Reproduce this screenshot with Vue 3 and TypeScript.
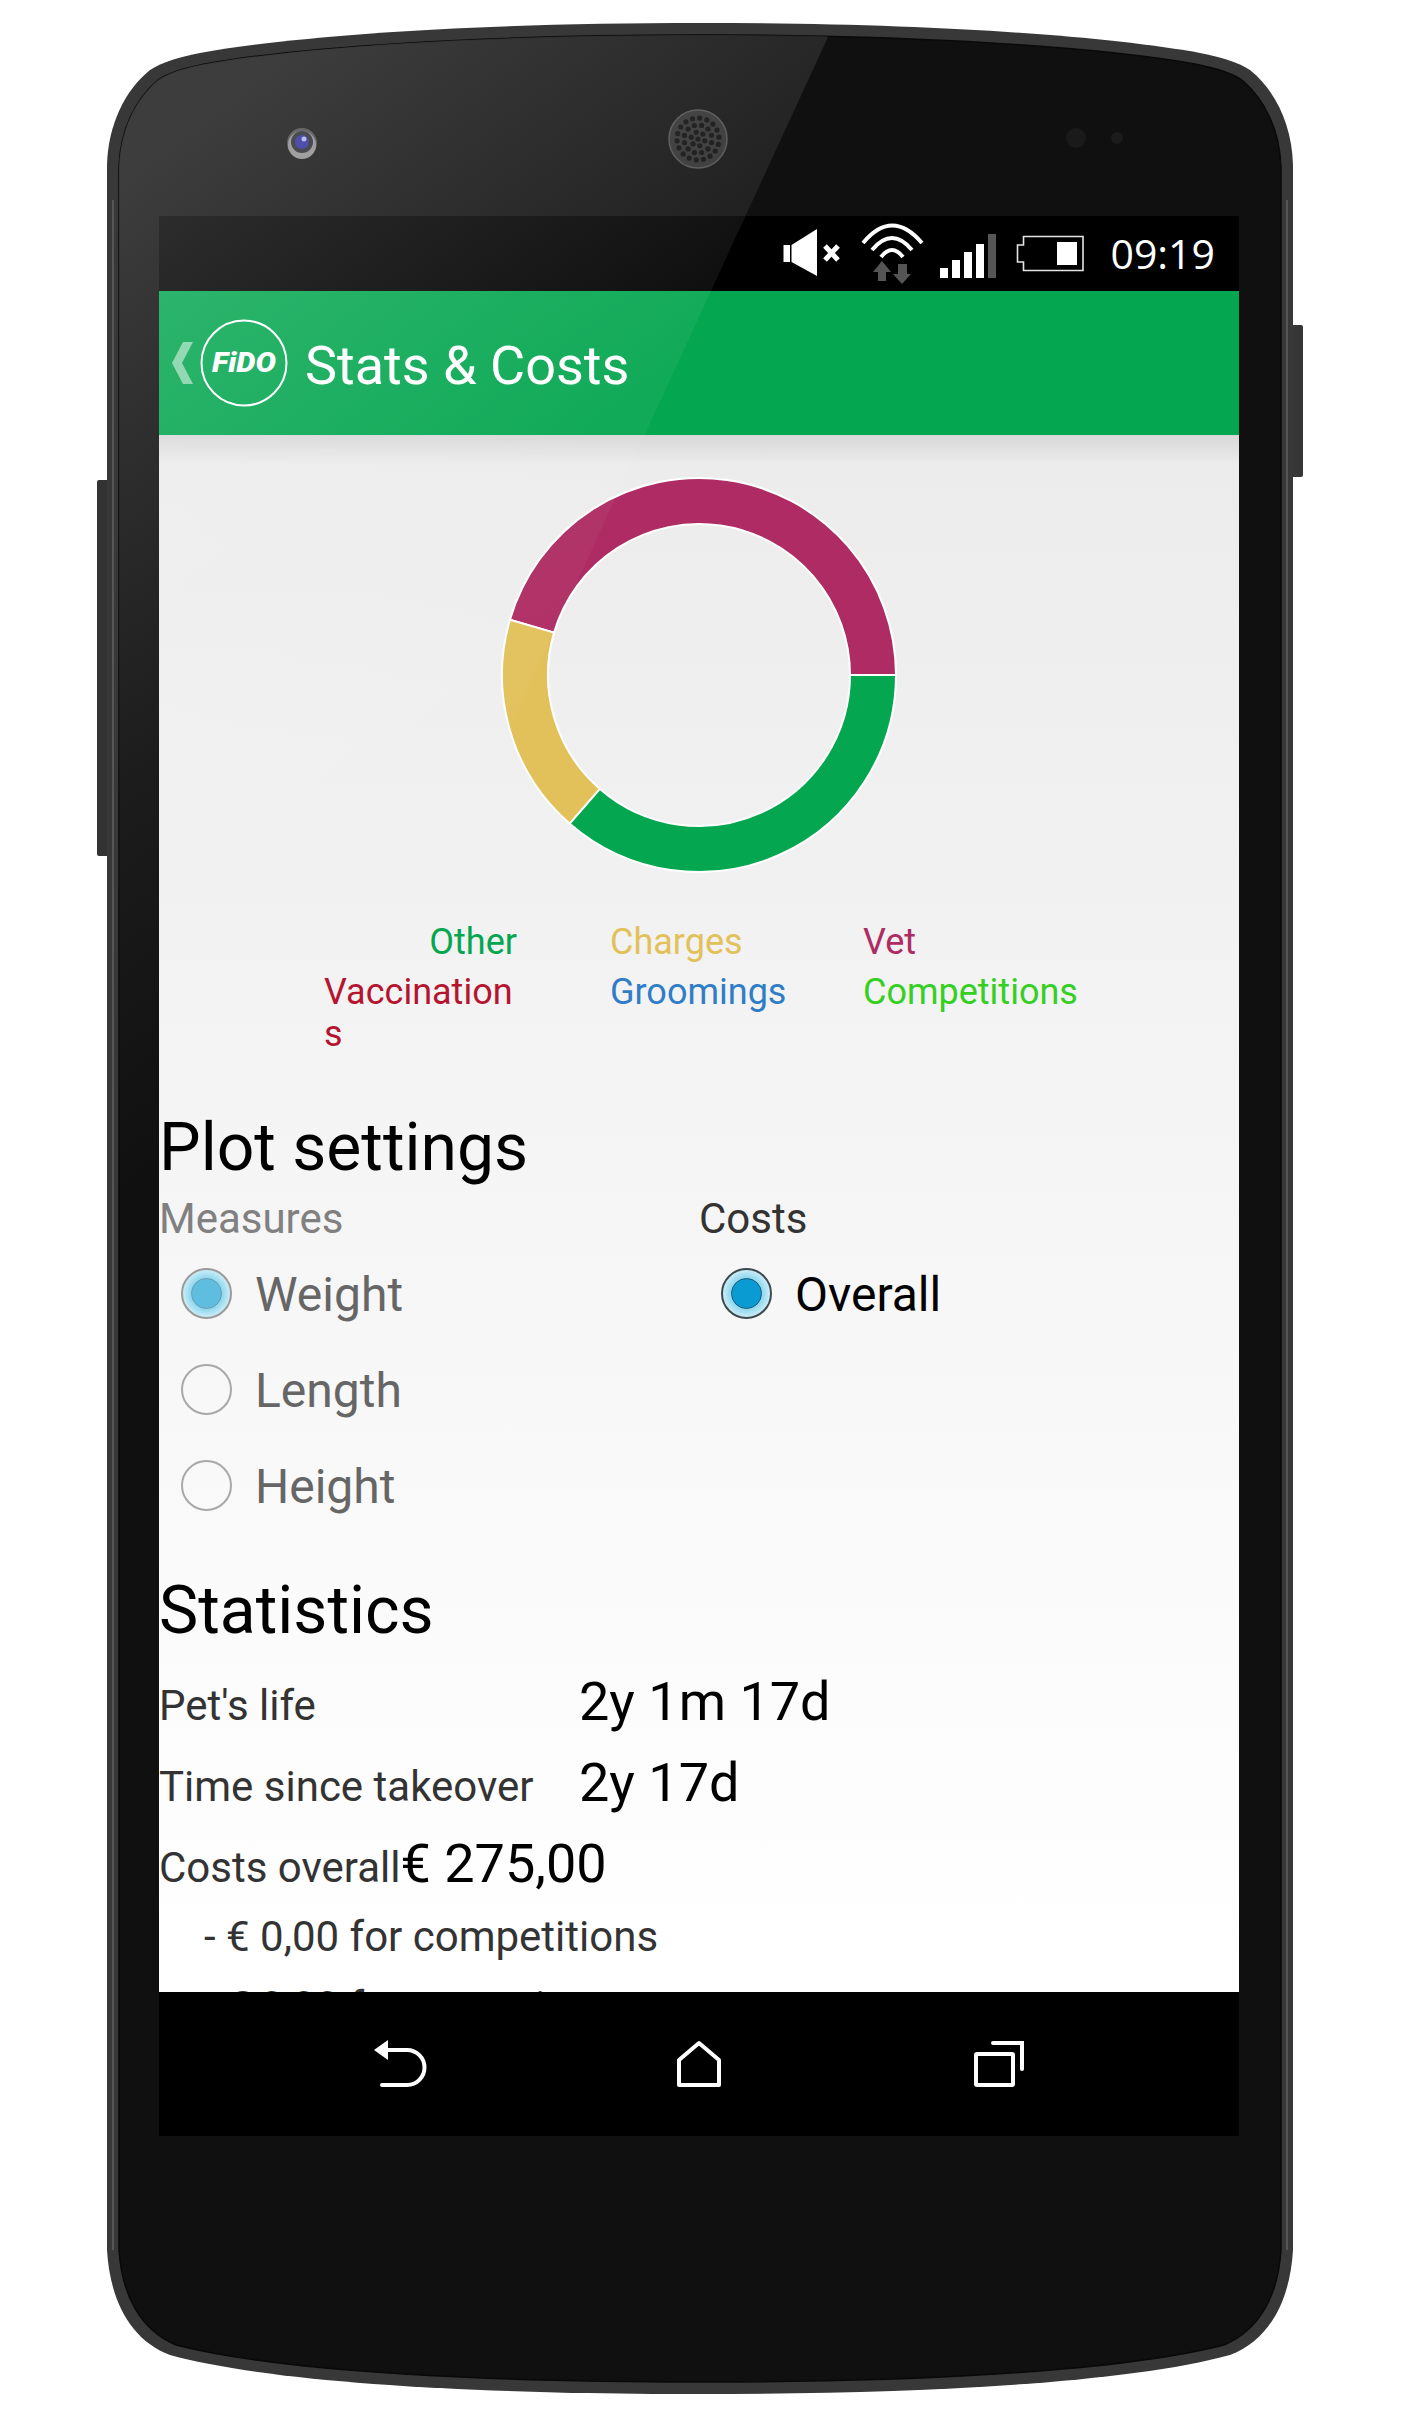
<script setup lang="ts">
interface Slice {
  color: string
  start: number
  end: number
}

const outer = 197
const inner = 151

// angles run counter-clockwise from the right edge of the ring
const slices: Slice[] = [
  { color: '#ae2c63', start: 0, end: 163.7 },
  { color: '#e2c15a', start: 163.7, end: 229 },
  { color: '#05a650', start: 229, end: 360 },
]

function arcPath(s: Slice): string {
  const a0 = (s.start * Math.PI) / 180
  const a1 = (s.end * Math.PI) / 180
  const pt = (r: number, a: number) => `${(200 + r * Math.cos(a)).toFixed(2)} ${(200 - r * Math.sin(a)).toFixed(2)}`
  const large = s.end - s.start > 180 ? 1 : 0
  return `M${pt(outer, a0)} A${outer} ${outer} 0 ${large} 0 ${pt(outer, a1)} L${pt(inner, a1)} A${inner} ${inner} 0 ${large} 1 ${pt(inner, a0)} Z`
}

const legend = [
  { label: 'Other', color: '#05a650', cls: 'right' },
  { label: 'Charges', color: '#e2c15a', cls: '' },
  { label: 'Vet', color: '#ae2c63', cls: '' },
  { label: 'Vaccinations', color: '#b5142f', cls: 'wrap' },
  { label: 'Groomings', color: '#2f7dc6', cls: '' },
  { label: 'Competitions', color: '#35cf22', cls: '' },
]

const measures = [
  { label: 'Weight', checked: true },
  { label: 'Length', checked: false },
  { label: 'Height', checked: false },
]

const stats = [
  { label: "Pet's life", value: '2y 1m 17d', fixed: true },
  { label: 'Time since takeover', value: '2y 17d', fixed: true },
  { label: 'Costs overall', value: '€ 275,00', fixed: false },
]

const breakdown = ['- € 0,00 for competitions', '- € 0,00 for groomings']

// earpiece holes, concentric rings
const grille: { x: number; y: number }[] = [{ x: 698, y: 139 }]
for (const [r, n] of [[7, 6], [14, 12], [21, 18]] as const) {
  for (let i = 0; i < n; i++) {
    const a = (i / n) * Math.PI * 2 + 0.26
    grille.push({ x: 698 + r * Math.cos(a), y: 139 + r * Math.sin(a) })
  }
}

const outerBody =
  'M107 200 V165 C108 125 125 90 150 70 C162 62 180 57 200 53 C300 35 480 23 700 23 C920 23 1100 35 1200 53 C1220 57 1238 62 1250 70 C1275 90 1292 125 1293 165 V2250 C1290 2300 1270 2340 1230 2355 C1120 2385 900 2394 700 2394 C500 2394 280 2385 170 2355 C130 2340 110 2300 107 2250 Z'
const innerBody =
  'M119 200 V168 C120 130 135 100 158 80 C170 72 185 68 205 64 C300 47 480 35 700 35 C920 35 1100 47 1195 64 C1215 68 1230 72 1242 80 C1265 100 1280 130 1281 168 V2250 C1278 2295 1260 2330 1224 2345 C1115 2373 900 2382 700 2382 C500 2382 285 2373 176 2345 C140 2330 122 2295 119 2250 Z'
</script>

<template>
  <div class="page">
    <svg class="device" viewBox="0 0 1406 2428" width="1406" height="2428">
      <rect x="97" y="480" width="14" height="376" rx="2" fill="#333" />
      <rect x="1290" y="325" width="13" height="152" rx="2" fill="#363636" />
      <path :d="outerBody" fill="#383838" />
      <path d="M113 200 V2250 M1287 200 V2250" stroke="#565656" stroke-width="2" fill="none" />
      <path :d="innerBody" fill="#101010" stroke="#090909" stroke-width="1.5" />

      <circle cx="302" cy="143" r="15" fill="#4a4a4a" />
      <circle cx="302" cy="145" r="14" fill="#8d8d8d" />
      <circle cx="302" cy="142" r="11" fill="#26262e" />
      <circle cx="302" cy="142" r="7" fill="#2b2c9a" />
      <circle cx="304" cy="139" r="2.5" fill="#a9b2e6" />

      <circle cx="698" cy="139" r="29" fill="#2e2e2e" stroke="#4f4f4f" stroke-width="1.5" />
      <circle v-for="(d, i) in grille" :key="i" :cx="d.x" :cy="d.y" r="2.6" fill="#0b0b0b" />

      <circle cx="1076" cy="138" r="10" fill="#1a1a1a" />
      <circle cx="1117" cy="138" r="6" fill="#1b1b1b" />
    </svg>

    <div class="screen">
      <div class="status-bar">
        <svg class="status-icons" viewBox="780 216 320 75" width="320" height="75">
          <path d="M783.5 245 H790 V262 H783.5 Z M791.5 245 L817 229 V276 L791.5 262 Z" fill="#fff" />
          <path d="M825 246 L838 260 M838 246 L825 260" stroke="#fff" stroke-width="5" fill="none" />
          <g fill="none" stroke="#fff" stroke-width="4">
            <path d="M863 243 Q892 208 922 243" />
            <path d="M872 250 Q892 226 912 250" />
            <path d="M881 257 Q892 243 903 257" />
          </g>
          <path d="M882 261 L891 272 H886 V281 H878 V272 H873 Z" fill="#555" />
          <path d="M902 284 L893 274 H898 V264 H907 V274 H911 Z" fill="#555" />
          <rect x="940" y="268" width="8" height="10" fill="#fff" />
          <rect x="952" y="260" width="8" height="18" fill="#fff" />
          <rect x="964" y="252" width="8" height="26" fill="#fff" />
          <rect x="976" y="244" width="8" height="34" fill="#fff" />
          <rect x="988" y="234" width="8" height="44" fill="#555" />
          <path d="M1023.5 236.5 H1083 V270.5 H1023.5 V262 H1017.5 V245 H1023.5 Z" fill="none" stroke="#e4e4e4" stroke-width="1.6" />
          <rect x="1057" y="242" width="20" height="23" fill="#fff" />
        </svg>
        <span class="clock">09:19</span>
      </div>

      <header class="app-bar">
        <svg class="app-logo" viewBox="0 0 146 144" width="146" height="144">
          <path d="M34 51 H24 L13 72 L24 93 H34 L23 72 Z" fill="#fff" fill-opacity="0.5" />
          <circle cx="85" cy="72" r="42.5" fill="none" stroke="#fff" stroke-width="2" />
          <text
            x="53"
            y="81"
            class="logo-text"
            textLength="64"
            lengthAdjust="spacingAndGlyphs"
          >FiDO</text>
        </svg>
        <h1 class="title">Stats &amp; Costs</h1>
      </header>

      <main class="content">
        <div class="chart">
          <svg viewBox="0 0 400 400" width="400" height="400">
            <path v-for="s in slices" :key="s.color" :d="arcPath(s)" :fill="s.color" stroke="#fff" stroke-width="2" />
          </svg>
        </div>

        <div class="legend">
          <div
            v-for="item in legend"
            :key="item.label"
            class="legend-item"
            :class="item.cls"
            :style="{ color: item.color }"
          >{{ item.label }}</div>
        </div>

        <h2 class="heading plot-heading">Plot settings</h2>
        <div class="settings">
          <section class="group">
            <div class="group-title muted">Measures</div>
            <div v-for="m in measures" :key="m.label" class="radio-row dim">
              <span class="radio" :class="{ 'checked-soft': m.checked }"></span>
              <span class="radio-label">{{ m.label }}</span>
            </div>
          </section>
          <section class="group">
            <div class="group-title">Costs</div>
            <div class="radio-row">
              <span class="radio checked"></span>
              <span class="radio-label">Overall</span>
            </div>
          </section>
        </div>

        <h2 class="heading stats-heading">Statistics</h2>
        <div v-for="s in stats" :key="s.label" class="stat-row">
          <span class="stat-label" :class="{ fixed: s.fixed }">{{ s.label }}</span>
          <span class="stat-value">{{ s.value }}</span>
        </div>
        <div v-for="line in breakdown" :key="line" class="breakdown">{{ line }}</div>
      </main>

      <nav class="nav-bar">
        <svg viewBox="369 2034 60 60" width="60" height="60">
          <path d="M386 2050 H407 A17.5 17.5 0 0 1 407 2085 H382" fill="none" stroke="#fff" stroke-width="4" stroke-linecap="round" />
          <path d="M374 2050 L388 2040 V2060 Z" fill="#fff" />
        </svg>
        <svg viewBox="669 2034 60 60" width="60" height="60">
          <path d="M679 2085 V2060 L699 2043 L719 2060 V2085 Z" fill="none" stroke="#fff" stroke-width="4" stroke-linejoin="round" />
        </svg>
        <svg viewBox="969 2034 60 60" width="60" height="60">
          <rect x="976" y="2054" width="37" height="31" rx="1" fill="none" stroke="#fff" stroke-width="4" />
          <path d="M993 2043 H1022 V2069" fill="none" stroke="#fff" stroke-width="4" stroke-linecap="round" />
        </svg>
      </nav>
    </div>

    <svg class="glare" viewBox="0 0 1406 2428" width="1406" height="2428">
      <defs>
        <linearGradient id="glareFade" gradientUnits="userSpaceOnUse" x1="150" y1="150" x2="650" y2="800">
          <stop offset="0" stop-color="#fff" stop-opacity="0.19" />
          <stop offset="0.6" stop-color="#fff" stop-opacity="0.05" />
          <stop offset="1" stop-color="#fff" stop-opacity="0" />
        </linearGradient>
        <clipPath id="glareClip">
          <path :d="innerBody" />
        </clipPath>
      </defs>
      <polygon points="100,0 845,0 200,1400 100,1400" fill="url(#glareFade)" clip-path="url(#glareClip)" />
    </svg>
  </div>
</template>

<style scoped>
.page {
  position: relative;
  width: 1406px;
  height: 2428px;
  padding: 216px 0 0 159px;
  box-sizing: border-box;
  overflow: hidden;
  background: #fff;
  font-family: Roboto, "Liberation Sans", sans-serif;
}

.device,
.glare {
  position: absolute;
  top: 0;
  left: 0;
}

.glare {
  pointer-events: none;
}

.screen {
  position: relative;
  display: flex;
  flex-direction: column;
  width: 1080px;
  height: 1920px;
}

.status-bar {
  display: flex;
  align-items: center;
  justify-content: flex-end;
  flex: none;
  height: 75px;
  padding-right: 24px;
  background: #000;
}

.clock {
  margin-left: 10px;
  color: #fff;
  font-family: "Open Sans", sans-serif;
  font-size: 41px;
  line-height: 75px;
}

.app-bar {
  display: flex;
  align-items: center;
  flex: none;
  height: 144px;
  background: #05a650;
}

.logo-text {
  fill: #fff;
  font-family: Roboto, sans-serif;
  font-size: 27px;
  font-style: italic;
  font-weight: 900;
}

.title {
  margin: 0;
  padding-top: 5px;
  color: #fff;
  font-size: 54px;
  font-weight: 400;
}

.content {
  flex: 1;
  min-height: 0;
  overflow: hidden;
  background: linear-gradient(#d8d8d8 0, #ececec 30px, #fff 1520px);
}

.chart {
  display: flex;
  justify-content: center;
  padding-top: 40px;
}

.legend {
  display: grid;
  grid-template-columns: 193px 160px 1fr;
  column-gap: 93px;
  row-gap: 8px;
  margin-top: 46px;
  padding-left: 165px;
  font-size: 36px;
}

.legend-item.right {
  text-align: right;
}

.legend-item.wrap {
  word-break: break-all;
}

.heading {
  margin: 0;
  color: #000;
  font-size: 66px;
  font-weight: 400;
}

.plot-heading {
  margin-top: 54px;
}

.stats-heading {
  margin-top: 39px;
}

.settings {
  display: grid;
  grid-template-columns: 540px 1fr;
  margin-top: 8px;
}

.group-title {
  margin-bottom: 2px;
  color: #333;
  font-size: 42px;
}

.group-title.muted {
  color: #808080;
}

.radio-row {
  display: flex;
  align-items: center;
  gap: 23px;
  height: 96px;
  padding-left: 22px;
  color: #000;
  font-size: 48px;
}

.radio-row.dim {
  color: #666;
}

.radio-label {
  padding-top: 2px;
}

.radio {
  position: relative;
  flex: none;
  box-sizing: border-box;
  width: 51px;
  height: 51px;
  border: 2px solid #a8a8a8;
  border-radius: 50%;
}

.radio.checked,
.radio.checked-soft {
  background: radial-gradient(circle, #8ad6ee 0, #8ad6ee 45%, #ffffff 92%);
}

.radio.checked {
  border-color: #3f4a50;
}

.radio.checked-soft {
  border-color: #9a9a9a;
}

.radio.checked::after,
.radio.checked-soft::after {
  content: "";
  position: absolute;
  top: 8px;
  left: 8px;
  width: 31px;
  height: 31px;
  box-sizing: border-box;
  border-radius: 50%;
}

.radio.checked::after {
  background: #0a9bd3;
  border: 1.5px solid #205a78;
}

.radio.checked-soft::after {
  background: #5fbde0;
  border: 1.5px solid #6d9cb0;
}

.stat-row {
  display: flex;
  align-items: baseline;
  margin-top: 18px;
  color: #333;
  font-size: 42px;
}

.stats-heading + .stat-row {
  margin-top: 21px;
}

.stat-label {
  flex: none;
}

.stat-label.fixed {
  width: 420px;
}

.stat-value {
  color: #000;
  font-size: 54px;
}

.breakdown {
  margin-top: 21px;
  padding-left: 45px;
  color: #333;
  font-size: 42px;
}

.stat-row + .breakdown {
  margin-top: 17px;
}

.nav-bar {
  display: flex;
  align-items: center;
  justify-content: center;
  gap: 240px;
  flex: none;
  height: 144px;
  background: #000;
}
</style>

<style>
html,
body {
  margin: 0;
  background: #fff;
}
</style>
